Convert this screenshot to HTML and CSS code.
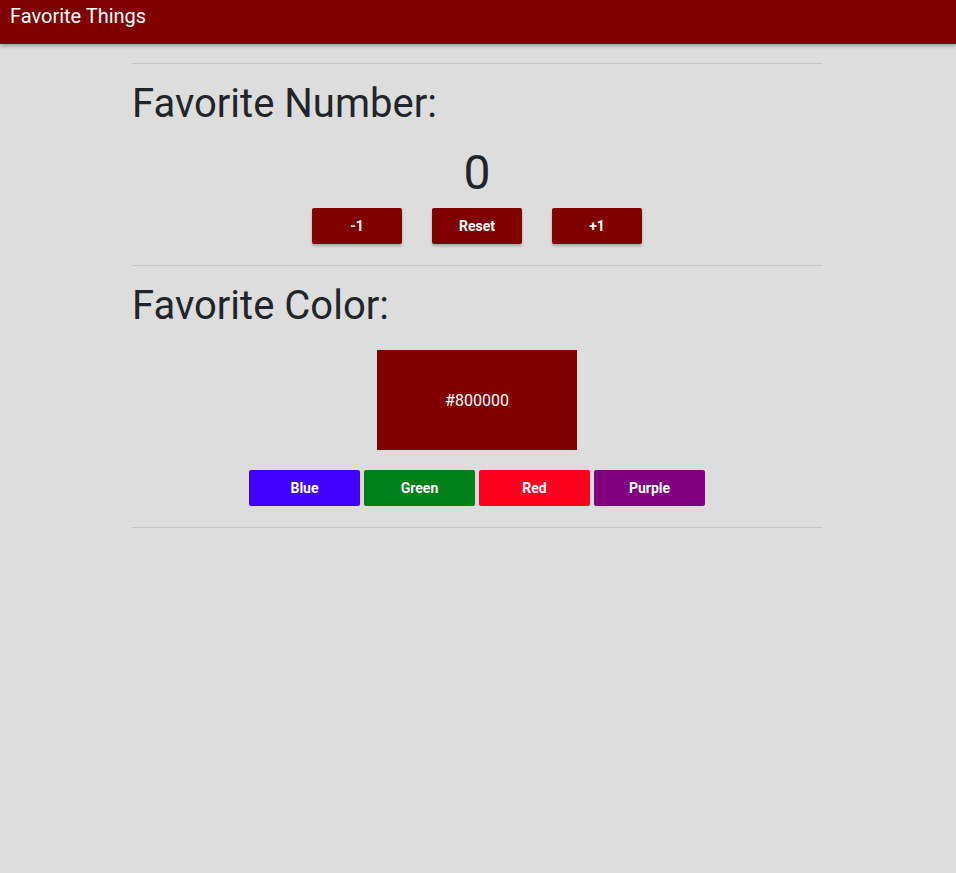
FILE: index.html
```html
<!DOCTYPE html>
<html>
<head>
<meta charset="utf-8">
<title>Favorite Things</title>
<link rel="stylesheet" href="styles.css">
</head>
<body>
<header class="app-bar">
  <div class="app-title">Favorite Things</div>
</header>
<div class="main-wrap">
<main class="container">
  <hr class="divider">
  <section class="section">
    <h1 class="section-title">Favorite Number:</h1>
    <div class="number">0</div>
    <div class="counter-buttons">
      <button class="btn btn-dark">-1</button>
      <button class="btn btn-dark">Reset</button>
      <button class="btn btn-dark">+1</button>
    </div>
  </section>
  <hr class="divider">
  <section class="section">
    <h1 class="section-title">Favorite Color:</h1>
    <div class="swatch-row">
      <div class="swatch">#800000</div>
    </div>
    <div class="color-buttons">
      <button class="cbtn cbtn-blue">Blue</button>
      <button class="cbtn cbtn-green">Green</button>
      <button class="cbtn cbtn-red">Red</button>
      <button class="cbtn cbtn-purple">Purple</button>
    </div>
  </section>
  <hr class="divider">
</main>
</div>
</body>
</html>
```

FILE: styles.css
```css
* { box-sizing: border-box; }
html, body {
  margin: 0;
  padding: 0;
}
body {
  background: #dddddd;
  font-family: Roboto, "Liberation Sans", sans-serif;
  color: #212529;
  min-height: 873px;
}
.app-bar {
  height: 44px;
  background: #800000;
  box-shadow: 0 2px 4px rgba(0,0,0,0.3);
  padding: 4px 10px 0;
}
.app-title {
  color: #ffffff;
  font-size: 20px;
  line-height: 24px;
}
.main-wrap {
  padding-right: 2px;
}
.container {
  width: 690px;
  margin: 0 auto;
  padding-top: 19px;
}
.divider {
  border: 0;
  border-top: 1px solid rgba(0,0,0,0.1);
  margin: 0 0 16px;
  height: 0;
}
.section {
  padding-bottom: 21px;
}
.section-title {
  font-size: 40px;
  font-weight: 400;
  line-height: 48px;
  margin: 0 0 8px;
}
.number {
  font-size: 48px;
  line-height: 57px;
  text-align: center;
  margin-top: 16px;
}
.counter-buttons {
  display: flex;
  justify-content: center;
  gap: 30px;
  margin-top: 7px;
}
.btn {
  width: 90px;
  height: 36px;
  border: 0;
  border-radius: 2px;
  color: #ffffff;
  font-family: Roboto, "Liberation Sans", sans-serif;
  font-size: 14px;
  font-weight: 700;
  box-shadow: 0 2px 3px rgba(0,0,0,0.25);
}
.btn-dark { background: #800000; }
.swatch-row {
  display: flex;
  justify-content: center;
  margin-top: 20px;
}
.swatch {
  width: 200px;
  height: 100px;
  background: #800000;
  color: #ffffff;
  font-size: 16px;
  display: flex;
  align-items: center;
  justify-content: center;
}
.color-buttons {
  display: flex;
  justify-content: center;
  gap: 4px;
  margin-top: 20px;
}
.cbtn {
  width: 111px;
  height: 36px;
  border: 0;
  border-radius: 2px;
  color: #ffffff;
  font-family: Roboto, "Liberation Sans", sans-serif;
  font-size: 14px;
  font-weight: 700;
}
.cbtn-blue { background: #4000ff; }
.cbtn-green { background: #008018; }
.cbtn-red { background: #ff0020; }
.cbtn-purple { background: #800080; }
```
